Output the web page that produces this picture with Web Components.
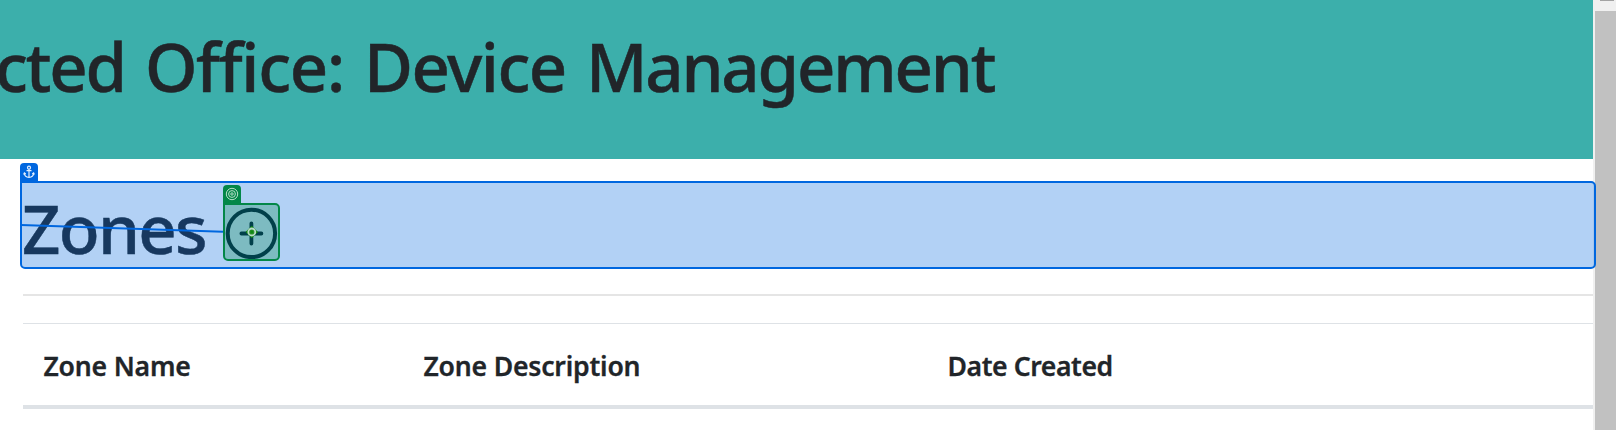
<!DOCTYPE html>
<html lang="en"><head><meta charset="utf-8"><title>Device Management</title>
<style>html,body{margin:0;height:430px;overflow:hidden;background:#fff}</style></head>
<body><device-app></device-app>
<script>
const define=(name,html)=>customElements.define(name,class extends HTMLElement{
  constructor(){super();this.attachShadow({mode:'open'}).innerHTML=html;}
});
define('page-banner',`<style>
:host{display:block;height:159px;background:#3cafab}
h1{margin:0;padding-top:16px;font-size:67px;line-height:100px;font-weight:500;white-space:nowrap;margin-left:-5px;word-spacing:2.7px;-webkit-text-stroke:.5px #212529}
</style><h1><slot></slot></h1>`);
define('zone-heading',`<style>
:host{display:flex;height:84px;margin:24px 0 0 23px;align-items:flex-start}
h1{margin:0 0 0 -1px;width:201px;font-size:67px;line-height:100px;font-weight:500;letter-spacing:-1.7px;white-space:nowrap;margin-top:-5px;-webkit-text-stroke:.5px #212529}
svg{display:block;margin:23px 0 0 2px;flex:none}
</style><h1><slot></slot></h1>
<svg width="53" height="53" viewBox="0 0 53 53" fill="none" stroke="#00050c"><circle cx="26.4" cy="27.4" r="23.7" stroke-width="4"/><path d="M26.4 17.5v20M16.4 27.5h20" stroke-width="3.8" stroke-linecap="round"/></svg>`);
define('zone-table',`<style>
:host{display:block;margin:27px 0 0 23px}
.rule{height:2px;background:#e5e5e5;margin-bottom:27px}
.head{display:grid;grid-template-columns:380px 524px 1fr;border-top:1px solid #dee2e6;border-bottom:4px solid #dee2e6;height:81px;font-size:26.6px;font-weight:600;letter-spacing:-.2px;line-height:36px;-webkit-text-stroke:.3px #212529}
.head span:last-child{letter-spacing:-.43px}
.head span{padding:24px 0 0 20.5px;white-space:nowrap}
</style><div class="rule"></div><div class="head"><span>Zone Name</span><span>Zone Description</span><span>Date Created</span></div>`);
define('scroll-bar',`<style>
:host{display:flex;flex-direction:column;background:#f0f0f0}
.arrow{height:1px;width:14px;margin:0 0 10px 7px;background:#a3a3a3}
.thumb{flex:1;margin-left:2px;background:#c1c1c1}
</style><div class="arrow"></div><div class="thumb"></div>`);
define('pick-box',`<style>
:host{display:block;position:absolute;box-sizing:border-box;border:2px solid var(--c);background:var(--f);border-radius:0 5px 5px 5px}
.tag{position:absolute;left:-2px;top:-20px;width:18px;height:18px;background:var(--c);border-radius:4px 4px 0 0}
</style><div class="tag"><slot></slot></div>`);
define('device-app',`<style>
:host{display:grid;grid-template-columns:1593px 23px;height:430px;position:relative;overflow:hidden;color:#212529;font-family:"Noto Sans","Open Sans",sans-serif}
.w1{letter-spacing:-2.2px}.w2{letter-spacing:-1.3px}.w3{letter-spacing:-1.5px}.w4{letter-spacing:-2.15px}
.blue{--c:#0067df;--f:rgba(0,103,223,.3);left:20px;top:181px;width:1576px;height:88px}
.green{--c:#038748;--f:rgba(3,135,72,.3);left:223px;top:203px;width:57px;height:58px}
pick-box svg{display:block}
.link{position:absolute;left:0;top:0;pointer-events:none}
</style>
<main><page-banner><span class="w1">cted</span> <span class="w2">Office:</span> <span class="w3">Device</span> <span class="w4">Management</span></page-banner><zone-heading>Zones</zone-heading><zone-table></zone-table></main>
<scroll-bar></scroll-bar>
<pick-box class="blue"><svg width="18" height="18" viewBox="0 0 18 18" fill="none" stroke="#e4f0ff" stroke-width="1.2"><circle cx="9" cy="4.7" r="1.5"/><path d="M9 6.2v8.2M6.5 7.7h5M4.3 10.1c.1 2.5 1.7 4.2 4.7 4.4 3-.2 4.6-1.9 4.7-4.4M3.6 11.5l.8-1.6 1.4 1M14.4 11.5l-.8-1.6-1.4 1"/></svg></pick-box>
<pick-box class="green"><svg width="18" height="18" viewBox="0 0 18 18" fill="none" stroke="#b9dfca"><circle cx="9" cy="9" r="5.7"/><circle cx="9" cy="9" r="3.4"/><circle cx="9" cy="9" r="1.2"/></svg></pick-box>
<svg class="link" width="300" height="280"><path d="M21 225L223 231.8" stroke="#0067df" stroke-width="2"/><path d="M251.8 225.8l6.2 6.2-6.2 6.2-6.2-6.2z" fill="#118a11"/><circle cx="251.8" cy="232" r="3.5" fill="#2b8f2b" stroke="#b9dcc9" stroke-width="1.8"/><circle cx="251.8" cy="232" r="1.4" fill="#118a11"/></svg>`);
</script></body></html>
